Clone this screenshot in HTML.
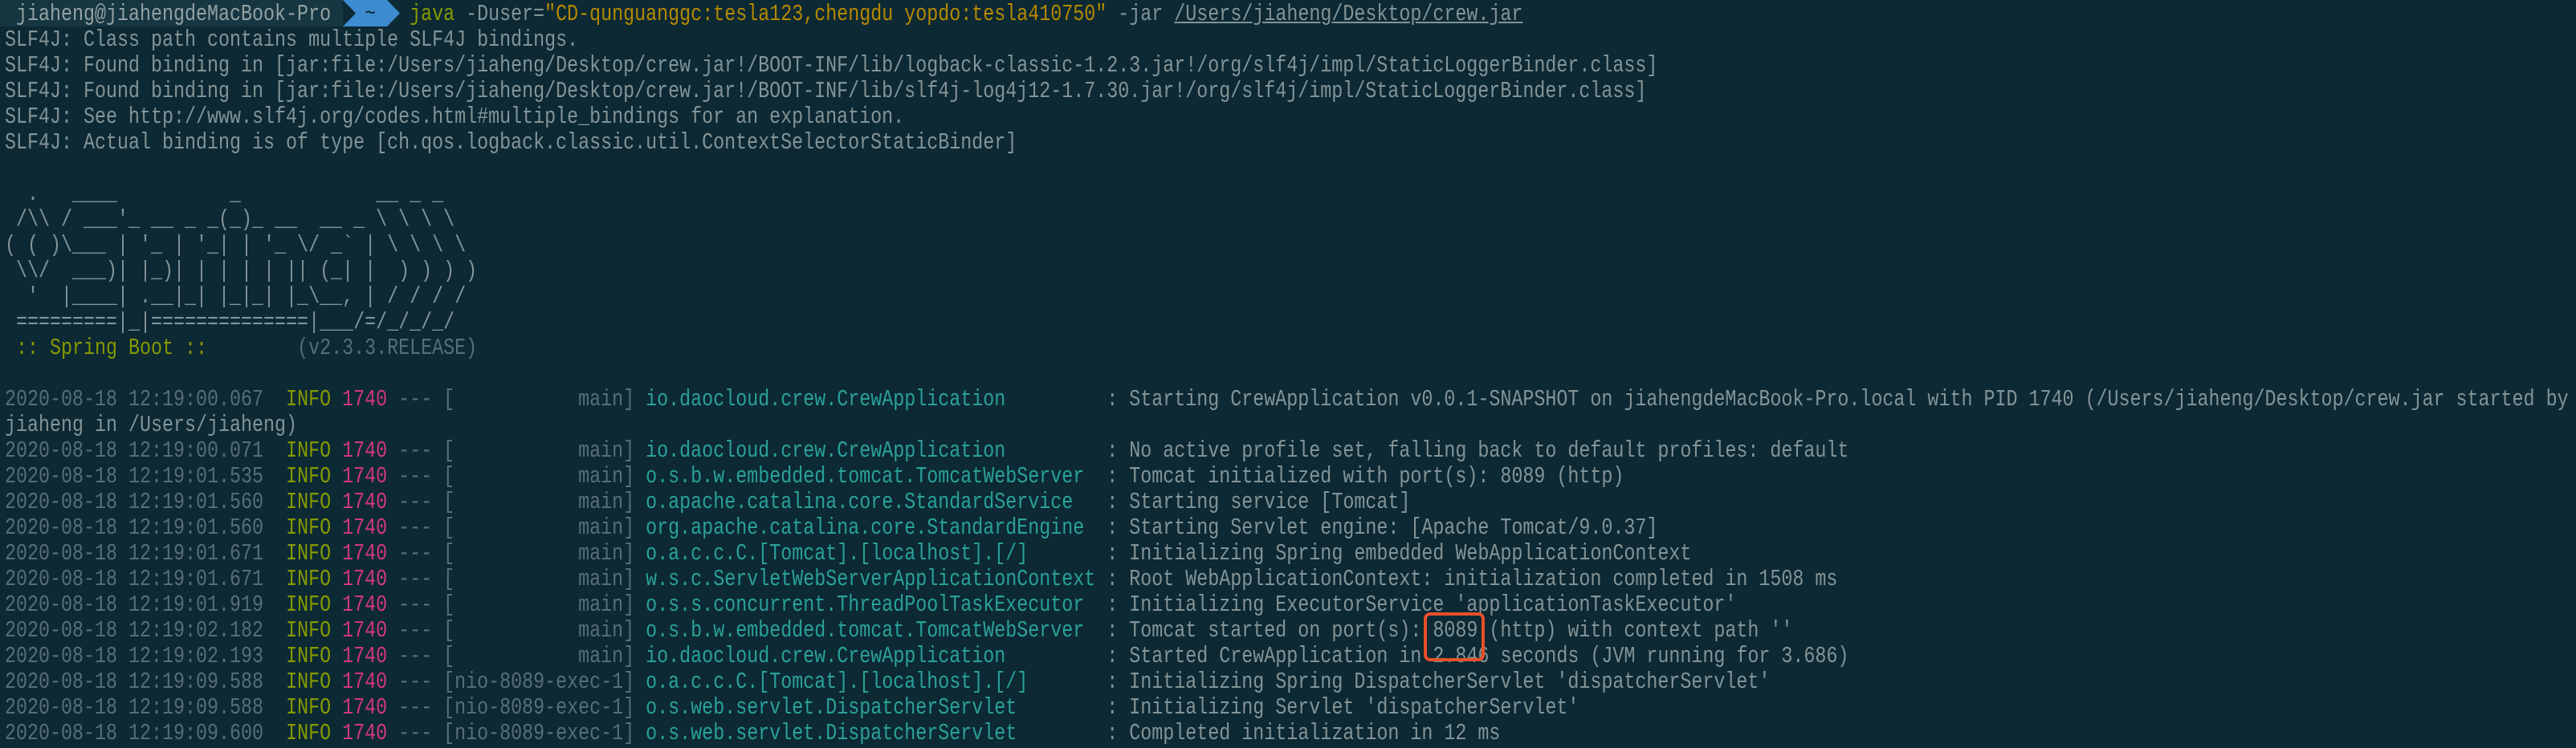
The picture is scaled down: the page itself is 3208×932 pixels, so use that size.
<!DOCTYPE html>
<html><head><meta charset="utf-8"><style>
html,body{margin:0;padding:0;background:#0c2934;width:3208px;height:932px;overflow:hidden}
#t{position:absolute;left:6px;top:2px;width:3990px;transform:scaleX(0.8046);transform-origin:0 0;font-family:"Liberation Mono",monospace;font-size:29px;color:#839496}
.r{height:32px;line-height:32px;white-space:pre}
.d{color:#586e75}.g{color:#859900}.m{color:#d33682}.c{color:#2aa198}.y{color:#b58900}
.l{display:inline-block;width:40ch;color:#2aa198}
#bar{position:absolute;left:0;top:0;width:427px;height:33px;background:#163642}
#box{position:absolute;left:1773px;top:763px;width:68px;height:53px;border:4px solid #e8502a;border-radius:8px}
</style></head><body>
<div id="bar"></div>
<svg style="position:absolute;left:0;top:0" width="520" height="33"><polygon points="427,0 482,0 498,16.5 482,33 427,33 443,16.5" fill="#3d8bd0"/></svg>
<div id="t">
<div class="r"><span style="color:#93a1a1"> jiaheng@jiahengdeMacBook-Pro</span>   <span style="color:#0c2934">~</span>   <span class="g">java</span> -Duser=<span class="y">"CD-qunguanggc:tesla123,chengdu yopdo:tesla410750"</span> -jar <span style="text-decoration:underline">/Users/jiaheng/Desktop/crew.jar</span></div>
<div class="r">SLF4J: Class path contains multiple SLF4J bindings.</div>
<div class="r">SLF4J: Found binding in [jar:file:/Users/jiaheng/Desktop/crew.jar!/BOOT-INF/lib/logback-classic-1.2.3.jar!/org/slf4j/impl/StaticLoggerBinder.class]</div>
<div class="r">SLF4J: Found binding in [jar:file:/Users/jiaheng/Desktop/crew.jar!/BOOT-INF/lib/slf4j-log4j12-1.7.30.jar!/org/slf4j/impl/StaticLoggerBinder.class]</div>
<div class="r">SLF4J: See http://www.slf4j.org/codes.html#multiple_bindings for an explanation.</div>
<div class="r">SLF4J: Actual binding is of type [ch.qos.logback.classic.util.ContextSelectorStaticBinder]</div>
<div class="r"> </div>
<div class="r">  .   ____          _            __ _ _</div>
<div class="r"> /\\ / ___'_ __ _ _(_)_ __  __ _ \ \ \ \</div>
<div class="r">( ( )\___ | '_ | '_| | '_ \/ _` | \ \ \ \</div>
<div class="r"> \\/  ___)| |_)| | | | | || (_| |  ) ) ) )</div>
<div class="r">  '  |____| .__|_| |_|_| |_\__, | / / / /</div>
<div class="r"> =========|_|==============|___/=/_/_/_/</div>
<div class="r"><span class="g"> :: Spring Boot :: </span>       <span class="d">(v2.3.3.RELEASE)</span></div>
<div class="r"> </div>
<div class="r"><span class="d">2020-08-18 12:19:00.067</span>  <span class="g">INFO</span> <span class="m">1740</span> <span class="d">--- [           main]</span> <span class="l">io.daocloud.crew.CrewApplication</span> : Starting CrewApplication v0.0.1-SNAPSHOT on jiahengdeMacBook-Pro.local with PID 1740 (/Users/jiaheng/Desktop/crew.jar started by</div>
<div class="r">jiaheng in /Users/jiaheng)</div>
<div class="r"><span class="d">2020-08-18 12:19:00.071</span>  <span class="g">INFO</span> <span class="m">1740</span> <span class="d">--- [           main]</span> <span class="l">io.daocloud.crew.CrewApplication</span> : No active profile set, falling back to default profiles: default</div>
<div class="r"><span class="d">2020-08-18 12:19:01.535</span>  <span class="g">INFO</span> <span class="m">1740</span> <span class="d">--- [           main]</span> <span class="l">o.s.b.w.embedded.tomcat.TomcatWebServer</span> : Tomcat initialized with port(s): 8089 (http)</div>
<div class="r"><span class="d">2020-08-18 12:19:01.560</span>  <span class="g">INFO</span> <span class="m">1740</span> <span class="d">--- [           main]</span> <span class="l">o.apache.catalina.core.StandardService</span> : Starting service [Tomcat]</div>
<div class="r"><span class="d">2020-08-18 12:19:01.560</span>  <span class="g">INFO</span> <span class="m">1740</span> <span class="d">--- [           main]</span> <span class="l">org.apache.catalina.core.StandardEngine</span> : Starting Servlet engine: [Apache Tomcat/9.0.37]</div>
<div class="r"><span class="d">2020-08-18 12:19:01.671</span>  <span class="g">INFO</span> <span class="m">1740</span> <span class="d">--- [           main]</span> <span class="l">o.a.c.c.C.[Tomcat].[localhost].[/]</span> : Initializing Spring embedded WebApplicationContext</div>
<div class="r"><span class="d">2020-08-18 12:19:01.671</span>  <span class="g">INFO</span> <span class="m">1740</span> <span class="d">--- [           main]</span> <span class="l">w.s.c.ServletWebServerApplicationContext</span> : Root WebApplicationContext: initialization completed in 1508 ms</div>
<div class="r"><span class="d">2020-08-18 12:19:01.919</span>  <span class="g">INFO</span> <span class="m">1740</span> <span class="d">--- [           main]</span> <span class="l">o.s.s.concurrent.ThreadPoolTaskExecutor</span> : Initializing ExecutorService 'applicationTaskExecutor'</div>
<div class="r"><span class="d">2020-08-18 12:19:02.182</span>  <span class="g">INFO</span> <span class="m">1740</span> <span class="d">--- [           main]</span> <span class="l">o.s.b.w.embedded.tomcat.TomcatWebServer</span> : Tomcat started on port(s): 8089 (http) with context path ''</div>
<div class="r"><span class="d">2020-08-18 12:19:02.193</span>  <span class="g">INFO</span> <span class="m">1740</span> <span class="d">--- [           main]</span> <span class="l">io.daocloud.crew.CrewApplication</span> : Started CrewApplication in 2.846 seconds (JVM running for 3.686)</div>
<div class="r"><span class="d">2020-08-18 12:19:09.588</span>  <span class="g">INFO</span> <span class="m">1740</span> <span class="d">--- [nio-8089-exec-1]</span> <span class="l">o.a.c.c.C.[Tomcat].[localhost].[/]</span> : Initializing Spring DispatcherServlet 'dispatcherServlet'</div>
<div class="r"><span class="d">2020-08-18 12:19:09.588</span>  <span class="g">INFO</span> <span class="m">1740</span> <span class="d">--- [nio-8089-exec-1]</span> <span class="l">o.s.web.servlet.DispatcherServlet</span> : Initializing Servlet 'dispatcherServlet'</div>
<div class="r"><span class="d">2020-08-18 12:19:09.600</span>  <span class="g">INFO</span> <span class="m">1740</span> <span class="d">--- [nio-8089-exec-1]</span> <span class="l">o.s.web.servlet.DispatcherServlet</span> : Completed initialization in 12 ms</div>
</div>
<div id="box"></div>
</body></html>
